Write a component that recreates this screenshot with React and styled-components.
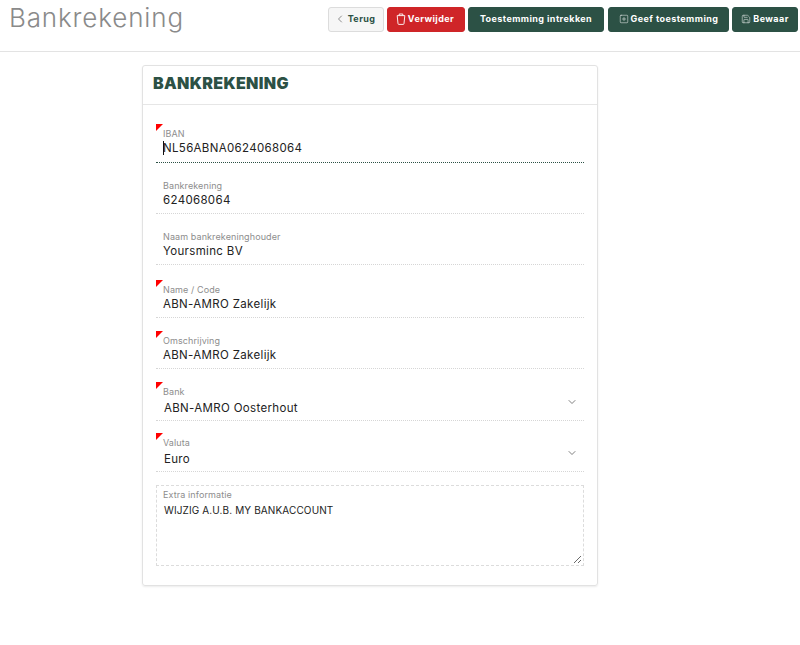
import React from "react";
import styled, { createGlobalStyle } from "styled-components";
import { ChevronLeft, ChevronDown, SquarePlus, Save } from "lucide-react";

const Global = createGlobalStyle`
  html, body { margin: 0; padding: 0; background: #fff; }
  body { font-family: "Inter", "Liberation Sans", sans-serif; color: #222; }
  * { box-sizing: border-box; }
`;

const Page = styled.div`
  width: 800px;
  height: 645px;
  overflow: hidden;
  background: #fff;
`;

const TopBar = styled.header`
  height: 52px;
  border-bottom: 1px solid #e3e3e3;
  display: flex;
  justify-content: space-between;
  align-items: flex-start;
  padding: 7px 2px 0 9px;
`;

const Title = styled.h1`
  margin: -6px 0 0;
  font-size: 26px;
  line-height: 34px;
  font-weight: 300;
  letter-spacing: 0.85px;
  color: #8a8a8a;
`;

const Toolbar = styled.div`
  display: flex;
  gap: 3px;
`;

const colours = {
  light: { bg: "#f6f6f6", fg: "#2c5145", border: "#dcdcdc" },
  red: { bg: "#cf2528", fg: "#fff", border: "#cf2528" },
  green: { bg: "#2c5145", fg: "#fff", border: "#2c5145" },
};

const Button = styled.button`
  width: ${(p) => p.$w}px;
  height: 25px;
  margin-left: ${(p) => p.$ml || 0}px;
  padding: 0 ${(p) => p.$pr || 0}px 2px 0;
  border-radius: 3px;
  border: 1px solid ${(p) => colours[p.$kind].border};
  background: ${(p) => colours[p.$kind].bg};
  color: ${(p) => colours[p.$kind].fg};
  font: 700 9px "Inter", "Liberation Sans", sans-serif;
  letter-spacing: 0.42px;
  display: flex;
  align-items: center;
  justify-content: center;
  gap: 2px;
  white-space: nowrap;
`;

const Main = styled.main`
  display: flex;
  padding: 13px 0 0 142px;
`;

const Card = styled.section`
  width: 456px;
  height: 521px;
  border: 1px solid #e2e2e2;
  border-radius: 3px;
  box-shadow: 0 1px 2px rgba(0, 0, 0, 0.08);
`;

const CardHeader = styled.div`
  height: 39px;
  border-bottom: 1px solid #e6e6e6;
  padding: 0 0 4px 10px;
  display: flex;
  align-items: center;
`;

const CardTitle = styled.h2`
  margin: 0;
  font-size: 16px;
  font-weight: 900;
  letter-spacing: 0.35px;
  color: #2c5145;
`;

const Form = styled.div`
  display: flex;
  flex-direction: column;
  padding: 19px 13px 0;
  gap: 13px;
`;

const Field = styled.div`
  position: relative;
  height: ${(p) => p.$h || 38}px;
  margin-top: ${(p) => p.$mt || 0}px;
  padding: 4px 0 0 7px;
  border-bottom: 1px dotted ${(p) => (p.$active ? "#2c5145" : "#d6d6d6")};
`;

const RequiredMark = styled.span`
  position: absolute;
  left: 0;
  top: 0;
  width: 0;
  height: 0;
  border-top: 7px solid #f00;
  border-right: 7px solid transparent;
`;

const Label = styled.div`
  font-size: 9px;
  line-height: 11px;
  color: #8d8d8d;
  letter-spacing: 0.1px;
`;

const Value = styled.div`
  position: relative;
  font-size: 11.5px;
  line-height: 14px;
  margin-top: ${(p) => (p.$select ? 4 : 2)}px;
  padding-left: ${(p) => (p.$select ? 1 : 0)}px;
  color: #222;
  letter-spacing: 0.33px;
`;

const Caret = styled.span`
  position: absolute;
  left: 0;
  top: 0;
  width: 1px;
  height: 14px;
  background: #111;
`;

const SelectArrow = styled.span`
  position: absolute;
  right: 6px;
  bottom: 12px;
  display: flex;
  color: #555;
`;

const AreaField = styled.div`
  position: relative;
  height: 81px;
  padding: 3px 0 0 6px;
  border: 1px dashed #dcdcdc;
`;

const AreaText = styled.div`
  font-size: 10px;
  line-height: 13px;
  margin: 4px 0 0 1px;
  letter-spacing: 0.12px;
  color: #222;
`;

const Grip = styled.svg`
  position: absolute;
  right: 1px;
  bottom: 1px;
`;

const TrashCup = () => (
  <svg width="10" height="12" viewBox="0 0 10 12" fill="none" stroke="currentColor" strokeWidth="0.9">
    <path d="M1.2 2.6h7.6L8 10.6a.8.8 0 0 1-.8.8H2.8a.8.8 0 0 1-.8-.8z" />
    <path d="M3.2 2.4V1h3.6v1.4" />
  </svg>
);

const fields = [
  { label: "IBAN", value: "NL56ABNA0624068064", required: true, active: true, h: 39 },
  { label: "Bankrekening", value: "624068064" },
  { label: "Naam bankrekeninghouder", value: "Yoursminc BV" },
  { label: "Name / Code", value: "ABN-AMRO Zakelijk", required: true, mt: 2 },
  { label: "Omschrijving", value: "ABN-AMRO Zakelijk", required: true },
  { label: "Bank", value: "ABN-AMRO Oosterhout", required: true, select: true, h: 39 },
  { label: "Valuta", value: "Euro", required: true, select: true, h: 39, mt: -1 },
];

export default function App() {
  return (
    <Page>
      <Global />
      <TopBar>
        <Title>Bankrekening</Title>
        <Toolbar>
          <Button $kind="light" $w={56} $pr={3}>
            <ChevronLeft size={12} strokeWidth={1.3} color="#555" />
            Terug
          </Button>
          <Button $kind="red" $w={78} $pr={2}>
            <TrashCup />
            Verwijder
          </Button>
          <Button $kind="green" $w={136}>Toestemming intrekken</Button>
          <Button $kind="green" $w={121} $ml={1}>
            <SquarePlus size={10} strokeWidth={1.2} />
            Geef toestemming
          </Button>
          <Button $kind="green" $w={66}>
            <Save size={10} strokeWidth={1.2} />
            Bewaar
          </Button>
        </Toolbar>
      </TopBar>
      <Main>
        <Card>
          <CardHeader>
            <CardTitle>BANKREKENING</CardTitle>
          </CardHeader>
          <Form>
            {fields.map((f) => (
              <Field key={f.label} $h={f.h} $mt={f.mt} $active={f.active}>
                {f.required && <RequiredMark />}
                <Label>{f.label}</Label>
                <Value $select={f.select}>
                  {f.active && <Caret />}
                  {f.value}
                </Value>
                {f.select && (
                  <SelectArrow>
                    <ChevronDown size={12} strokeWidth={1.5} />
                  </SelectArrow>
                )}
              </Field>
            ))}
            <AreaField>
              <Label>Extra informatie</Label>
              <AreaText>WIJZIG A.U.B. MY BANKACCOUNT</AreaText>
              <Grip width="9" height="9" viewBox="0 0 9 9" fill="none" stroke="#444" strokeWidth="0.8">
                <path d="M1 8 8 1M5 8 8 5" />
              </Grip>
            </AreaField>
          </Form>
        </Card>
      </Main>
    </Page>
  );
}
